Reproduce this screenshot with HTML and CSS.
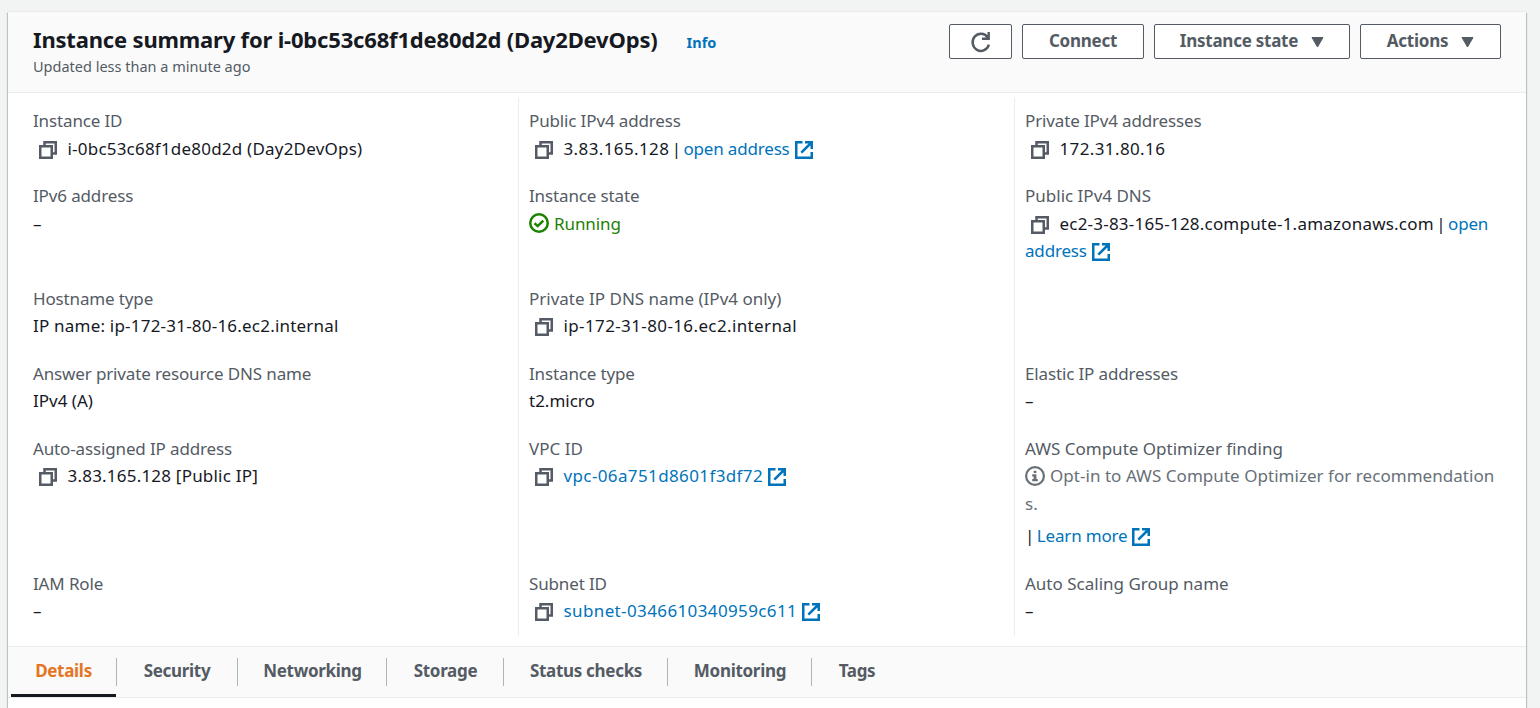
FILE: index.html
```
<!DOCTYPE html>
<html lang="en">
<head>
<meta charset="utf-8">
<title>Instance summary</title>
<link rel="stylesheet" href="styles.css">
</head>
<body>
<svg class="sprite" aria-hidden="true">
  <symbol id="copy" viewBox="0 0 18 18"><path d="M1.25 5.25h11.5v11.5H1.25zM5.5 5V1.25h11.25V12.5H13" fill="none" stroke="currentColor" stroke-width="2.5"/></symbol>
  <symbol id="external" viewBox="0 0 18 18"><path d="M7.5 1.25H1.25v15.5h15.5V11M10 1.25h6.75V8M16 2L6.3 11.7" fill="none" stroke="currentColor" stroke-width="2.5"/></symbol>
</svg>
<main class="card">
  <header class="head">
    <div class="heading">
      <div class="title-row"><h1 class="title">Instance summary for i-0bc53c68f1de80d2d (Day2DevOps)</h1><a class="info">Info</a></div>
      <p class="updated">Updated less than a minute ago</p>
    </div>
    <div class="actions">
      <button class="btn btn-refresh" aria-label="Refresh"><svg class="refresh" viewBox="0 0 20 20"><path d="M17.9 12.6A8.3 8.6 0 1 1 16.6 5.2M17.7 0v6.7H11" fill="none" stroke="currentColor" stroke-width="2.4"/></svg></button>
      <button class="btn btn-connect">Connect</button>
      <button class="btn btn-state">Instance state<svg class="caret" viewBox="0 0 12 11"><path d="M.5.5h11L6 10z" fill="currentColor" stroke="currentColor" stroke-linejoin="round"/></svg></button>
      <button class="btn btn-actions">Actions<svg class="caret" viewBox="0 0 12 11"><path d="M.5.5h11L6 10z" fill="currentColor" stroke="currentColor" stroke-linejoin="round"/></svg></button>
    </div>
  </header>
  <section class="columns">
    <dl class="column">
      <div><dt>Instance ID</dt><dd><svg class="copy"><use href="#copy"/></svg><span class="mixed">i-0bc53c68f1de80d2d (Day2DevOps)</span></dd></div>
      <div><dt>IPv6 address</dt><dd>–</dd></div>
      <div><dt>Hostname type</dt><dd class="mixed">IP name: ip-172-31-80-16.ec2.internal</dd></div>
      <div><dt>Answer private resource DNS name</dt><dd>IPv4 (A)</dd></div>
      <div><dt>Auto-assigned IP address</dt><dd><svg class="copy"><use href="#copy"/></svg><span class="mixed">3.83.165.128 [Public IP]</span></dd></div>
      <div><dt>IAM Role</dt><dd>–</dd></div>
    </dl>
    <dl class="column">
      <div><dt>Public IPv4 address</dt><dd class="piped"><svg class="copy"><use href="#copy"/></svg><span class="code">3.83.165.128</span> | <a>open address<svg class="ext"><use href="#external"/></svg></a></dd></div>
      <div><dt>Instance state</dt><dd class="running"><svg class="status" viewBox="0 0 20 20"><path d="M5.5 10.2l3.2 2.9 5.6-5.5" fill="none" stroke="currentColor" stroke-width="2.5"/><circle cx="10" cy="10" r="8.75" fill="none" stroke="currentColor" stroke-width="2.5"/></svg>Running</dd></div>
      <div><dt class="wide">Private IP DNS name (IPv4 only)</dt><dd><svg class="copy"><use href="#copy"/></svg><span class="code">ip-172-31-80-16.ec2.internal</span></dd></div>
      <div><dt>Instance type</dt><dd>t2.micro</dd></div>
      <div><dt class="wide">VPC ID</dt><dd><svg class="copy"><use href="#copy"/></svg><a><span class="code">vpc-06a751d8601f3df72</span><svg class="ext"><use href="#external"/></svg></a></dd></div>
      <div><dt>Subnet ID</dt><dd><svg class="copy"><use href="#copy"/></svg><a><span class="code">subnet-0346610340959c611</span><svg class="ext"><use href="#external"/></svg></a></dd></div>
    </dl>
    <dl class="column">
      <div><dt>Private IPv4 addresses</dt><dd><svg class="copy"><use href="#copy"/></svg><span class="code">172.31.80.16</span></dd></div>
      <div><dt class="wide">Public IPv4 DNS</dt><dd class="piped"><svg class="copy"><use href="#copy"/></svg><span class="mixed">ec2-3-83-165-128.compute-1.amazonaws.com</span> | <a>open<br>address<svg class="ext"><use href="#external"/></svg></a></dd></div>
      <div></div>
      <div><dt>Elastic IP addresses</dt><dd>–</dd></div>
      <div><dt class="wide">AWS Compute Optimizer finding</dt><dd class="piped"><p class="optin"><svg class="status" viewBox="0 0 20 20"><circle cx="10" cy="10" r="8.9" fill="none" stroke="currentColor" stroke-width="2.2"/><path d="M8.7 4.7h2.7v2.4H8.7zM7.2 8.3h4.2v4.8h1.4v2.1H7.2v-2.1h1.4v-2.7H7.2z" fill="currentColor"/></svg>Opt-in to AWS Compute Optimizer for recommendation<br>s.</p>| <a>Learn more<svg class="ext"><use href="#external"/></svg></a></dd></div>
      <div><dt class="wide">Auto Scaling Group name</dt><dd>–</dd></div>
    </dl>
  </section>
  <nav class="tabs">
    <a class="tab active">Details</a><a class="tab security">Security</a><a class="tab networking">Networking</a><a class="tab storage">Storage</a><a class="tab checks">Status checks</a><a class="tab monitoring">Monitoring</a><a class="tab tags">Tags</a>
  </nav>
</main>
</body>
</html>
```
FILE: styles.css
```
* { box-sizing: border-box; }
body { margin: 0; height: 708px; overflow: hidden; background: #f2f3f3; padding: 12px 14px 0 8px; font-family: "Noto Sans", "Open Sans", sans-serif; font-size: 17px; line-height: 27.5px; color: #16191f; }
h1, p, dl, dd { margin: 0; }
a { color: #0073bb; }
.sprite { position: absolute; width: 0; height: 0; }
.card { height: 720px; background: #fff; box-shadow: 0 0 1px 0 rgba(0, 28, 36, .2), 1px 1px 1px 0 rgba(0, 28, 36, .2), -1px 1px 1px 0 rgba(0, 28, 36, .2); }
.head { height: 81px; background: #fafafa; border-bottom: 1px solid #eaeded; padding: 12px 25px 0 25px; display: flex; justify-content: space-between; }
.heading { margin-top: -1px; }
.title-row { display: flex; align-items: baseline; height: 32px; }
.title { font-size: 22px; line-height: 32px; font-weight: 700; letter-spacing: -.18px; white-space: nowrap; }
.info { margin-left: 29px; font-size: 14.5px; font-weight: 700; }
.updated { font-size: 14.5px; line-height: 22px; color: #545b64; }
.actions { display: flex; gap: 10px; }
.btn { height: 35px; border: 1px solid #545b64; border-radius: 2px; background: #fff; color: #545b64; font: 700 17px/1 "Noto Sans", sans-serif; letter-spacing: -.25px; display: flex; align-items: center; justify-content: center; padding: 0 0 2px; white-space: nowrap; }
.btn-refresh { width: 63px; }
.btn-connect { width: 122px; }
.btn-state { width: 196px; }
.btn-actions { width: 141px; }
.refresh { width: 20px; height: 20px; margin-top: 2px; }
.caret { width: 13px; height: 11px; margin: 3px 0 0 13px; }
.columns { display: grid; grid-template-columns: 485px 496px 1fr; height: 553px; padding: 5px 25px 10px; }
.column { display: grid; grid-template-rows: 55px 82.5px 55px 55px 115px 55px; gap: 20px; padding-top: 9px; align-content: start; }
.column + .column { border-left: 1px solid #eaeded; padding-left: 10px; }
dt { color: #545b64; letter-spacing: -.14px; }
.wide { letter-spacing: 0; }
dd, dt { white-space: nowrap; }
.mixed { letter-spacing: .21px; }
.code { letter-spacing: .38px; }
.piped { word-spacing: -2px; }
.piped > a { letter-spacing: -.18px; word-spacing: 0; }
svg { overflow: visible; }
.copy { width: 18px; height: 18px; margin: 0 10.5px 0 6px; vertical-align: -4px; color: #545b64; }
.ext { width: 18px; height: 18px; margin-left: 5px; vertical-align: -4px; }
.status { width: 20px; height: 20px; margin-right: 5px; vertical-align: -3px; }
.optin .status { vertical-align: -4px; }
.running { color: #1d8102; letter-spacing: -.1px; }
.optin { color: #687078; margin-bottom: 5px; word-spacing: 0; letter-spacing: .04px; }
.tabs { height: 52px; background: #fafafa; border: solid #eaeded; border-width: 1px 0; display: flex; padding-left: 3px; }
.tab { display: flex; justify-content: center; height: 50px; padding-top: 10px; font-weight: 700; letter-spacing: -.3px; color: #545b64; position: relative; white-space: nowrap; }
.tab:not(:last-child)::after { content: ""; position: absolute; right: -1px; top: 11px; width: 1px; height: 28px; background: #aab7b8; }
.active { width: 105px; color: #e57423; border-bottom: 3px solid #16191f; }
.security { width: 121px; padding-left: 1px; }
.networking { width: 149px; padding-left: 2px; }
.storage { width: 117px; padding-left: 2px; }
.checks { width: 164px; padding-left: 2px; }
.monitoring { width: 144px; padding-left: 2px; }
.tags { width: 92px; }
```
